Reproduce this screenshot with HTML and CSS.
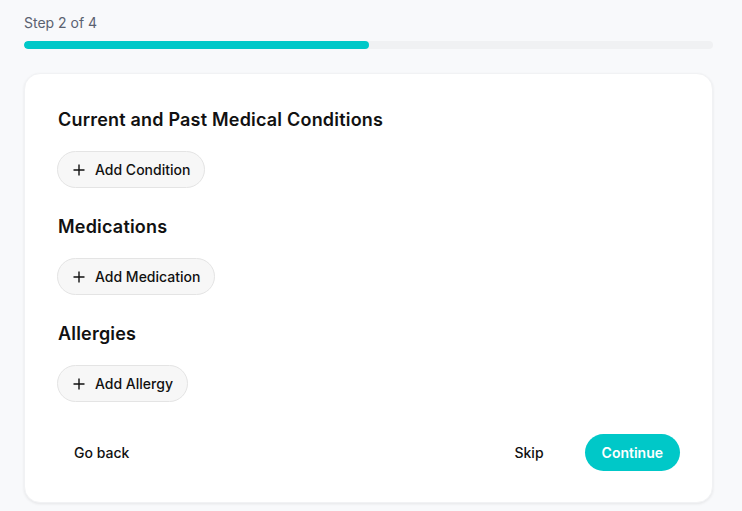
FILE: index.html
```html
<!DOCTYPE html>
<html lang="en">
<head>
    <meta charset="UTF-8">
    <meta name="viewport" content="width=device-width, initial-scale=1.0">
    <title>Medical History</title>
    <link rel="stylesheet" href="styles.css">
</head>
<body>

    <div class="progress-wrap">
        <div class="step-label">Step 2 of 4</div>
        <div class="progress-track">
            <div class="progress-fill" style="width: 50%;"></div>
        </div>
    </div>

    <div class="card">
        <div class="section">
            <h3>Current and Past Medical Conditions</h3>
            <button class="btn_add">
                <svg width="12" height="12" viewBox="0 0 12 12"><path d="M6 0.5v11M0.5 6h11" stroke="#111" stroke-width="1.4" fill="none"/></svg>
                Add Condition
            </button>
        </div>

        <div class="section">
            <h3>Medications</h3>
            <button class="btn_add">
                <svg width="12" height="12" viewBox="0 0 12 12"><path d="M6 0.5v11M0.5 6h11" stroke="#111" stroke-width="1.4" fill="none"/></svg>
                Add Medication
            </button>
        </div>

        <div class="section">
            <h3>Allergies</h3>
            <button class="btn_add">
                <svg width="12" height="12" viewBox="0 0 12 12"><path d="M6 0.5v11M0.5 6h11" stroke="#111" stroke-width="1.4" fill="none"/></svg>
                Add Allergy
            </button>
        </div>

        <!-- footer actions -->
        <div class="actions">
            <button class="btn_ghost btn_back">Go back</button>
            <div class="actions-right">
                <button class="btn_ghost">Skip</button>
                <button class="btn_primary">Continue</button>
            </div>
        </div>
    </div>

</body>
</html>
```

FILE: styles.css
```css
body {
    margin: 0;
    padding: 13px 29px 24px 24px;
    background-color: #f8f9fb;
    font-family: Inter, "Noto Sans", sans-serif;
    color: #111;
}
.step-label {
    font-size: 14px;
    line-height: 20px;
    color: #5a6170;
    margin-bottom: 8px;
}
.progress-track {
    height: 8px;
    border-radius: 4px;
    background-color: #f0f1f3;
    overflow: hidden;
}
.progress-fill {
    height: 100%;
    border-radius: 4px;
    background-color: #00c8c8;
}
.card {
    margin-top: 24px;
    background-color: #fff;
    border-radius: 16px;
    box-shadow: 0 1px 3px rgba(0, 0, 0, 0.08);
    border: 1px solid #f1f2f4;
    padding: 32px 32px 31px 32px;
}
.section {
    margin-bottom: 25px;
}
h3 {
    margin: 0 0 17px 1px;
    font-size: 18px;
    line-height: 28px;
    font-weight: 600;
    letter-spacing: 0.2px;
}
button {
    font-family: inherit;
    font-size: 14px;
    cursor: pointer;
}
.btn_add {
    display: flex;
    align-items: center;
    gap: 10px;
    height: 37px;
    padding: 0 14px 0 15px;
    border-radius: 19px;
    background-color: #f7f7f7;
    border: 1px solid #e4e4e4;
    color: #111;
    font-weight: 500;
}
.actions {
    display: flex;
    justify-content: space-between;
    align-items: center;
    margin-top: 32px;
}
.actions-right {
    display: flex;
    align-items: center;
    gap: 25px;
}
.btn_ghost {
    height: 37px;
    padding: 0 16px;
    border: none;
    background: none;
    color: #111;
    font-weight: 500;
}
.btn_back {
    padding-left: 17px;
}
.btn_primary {
    height: 37px;
    padding: 0 17px;
    border: none;
    border-radius: 19px;
    background-color: #00c8c8;
    color: #fff;
    font-weight: 600;
}
```
